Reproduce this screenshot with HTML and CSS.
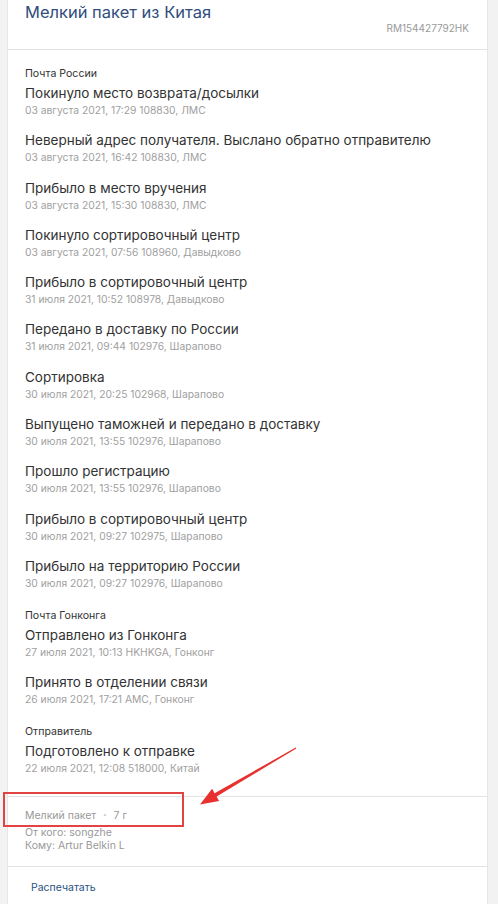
FILE: index.html
```html
<!DOCTYPE html>
<html lang="ru">
<head>
<meta charset="utf-8">
<link rel="stylesheet" href="styles.css">
</head>
<body>
<div class="card">
  <div class="head">
    <div class="title">Мелкий пакет из Китая</div>
    <div class="track">RM154427792HK</div>
  </div>
  <div class="events">
    <div class="group">
      <div class="org">Почта России</div>
      <div class="ev"><div class="ev-t">Покинуло место возврата/досылки</div><div class="ev-d">03 августа 2021, 17:29 108830, ЛМС</div></div>
      <div class="ev"><div class="ev-t">Неверный адрес получателя. Выслано обратно отправителю</div><div class="ev-d">03 августа 2021, 16:42 108830, ЛМС</div></div>
      <div class="ev"><div class="ev-t">Прибыло в место вручения</div><div class="ev-d">03 августа 2021, 15:30 108830, ЛМС</div></div>
      <div class="ev"><div class="ev-t">Покинуло сортировочный центр</div><div class="ev-d">03 августа 2021, 07:56 108960, Давыдково</div></div>
      <div class="ev"><div class="ev-t">Прибыло в сортировочный центр</div><div class="ev-d">31 июля 2021, 10:52 108978, Давыдково</div></div>
      <div class="ev"><div class="ev-t">Передано в доставку по России</div><div class="ev-d">31 июля 2021, 09:44 102976, Шарапово</div></div>
      <div class="ev"><div class="ev-t">Сортировка</div><div class="ev-d">30 июля 2021, 20:25 102968, Шарапово</div></div>
      <div class="ev"><div class="ev-t">Выпущено таможней и передано в доставку</div><div class="ev-d">30 июля 2021, 13:55 102976, Шарапово</div></div>
      <div class="ev"><div class="ev-t">Прошло регистрацию</div><div class="ev-d">30 июля 2021, 13:55 102976, Шарапово</div></div>
      <div class="ev"><div class="ev-t">Прибыло в сортировочный центр</div><div class="ev-d">30 июля 2021, 09:27 102975, Шарапово</div></div>
      <div class="ev"><div class="ev-t">Прибыло на территорию России</div><div class="ev-d">30 июля 2021, 09:27 102976, Шарапово</div></div>
    </div>
    <div class="group">
      <div class="org">Почта Гонконга</div>
      <div class="ev"><div class="ev-t">Отправлено из Гонконга</div><div class="ev-d">27 июля 2021, 10:13 HKHKGA, Гонконг</div></div>
      <div class="ev"><div class="ev-t">Принято в отделении связи</div><div class="ev-d">26 июля 2021, 17:21 AMC, Гонконг</div></div>
    </div>
    <div class="group">
      <div class="org">Отправитель</div>
      <div class="ev"><div class="ev-t">Подготовлено к отправке</div><div class="ev-d">22 июля 2021, 12:08 518000, Китай</div></div>
    </div>
  </div>
  <div class="info">
    <div class="info-main">Мелкий пакет <span class="dot">•</span> 7 г</div>
    <div class="info-line first">От кого: songzhe</div>
    <div class="info-line">Кому: Artur Belkin L</div>
  </div>
  <div class="actions">
    <a class="print">Распечатать</a>
  </div>
</div>
<div class="mark-box"></div>
<svg class="mark-arrow" width="498" height="904" viewBox="0 0 498 904">
  <polygon points="295.7,747.6 214.6,793.2 212.1,788.8 200,804.5 219.1,801 216.6,796.6 296.3,748.4" fill="#e8302e"/>
</svg>
</body>
</html>
```
FILE: styles.css
```css
html, body {
  margin: 0;
  padding: 0;
}
body {
  background: #f2f2f2;
  font-family: "Inter", "Noto Sans", sans-serif;
  color: #333;
  position: relative;
  width: 498px;
  height: 904px;
  overflow: hidden;
}
.card {
  margin-left: 7px;
  width: 479px;
  background: #fff;
  border-left: 1px solid #e6e6e6;
  border-right: 1px solid #e6e6e6;
  height: 904px;
}
.head {
  padding: 2px 18px 15px 17px;
  border-bottom: 1px solid #e3e3e3;
}
.title {
  font-size: 16.5px;
  line-height: 20px;
  color: #2f4d7d;
}
.track {
  text-align: right;
  font-size: 10px;
  line-height: 12px;
  color: #9a9a9a;
}
.events {
  padding: 17px 17px 21px;
  border-bottom: 1px solid #e3e3e3;
}
.group + .group {
  margin-top: 19px;
}
.org {
  font-size: 10.6px;
  line-height: 14px;
  color: #333;
  margin-bottom: 2px;
}
.ev + .ev {
  margin-top: 13.3px;
}
.ev-t {
  font-size: 13.5px;
  line-height: 20px;
  color: #333;
}
.ev-d {
  font-size: 10.3px;
  line-height: 14px;
  color: #a0a0a0;
}
.info {
  padding: 11px 17px 14px;
  border-bottom: 1px solid #e3e3e3;
  font-size: 10.5px;
  line-height: 13px;
  color: #999;
}
.info-main .dot {
  font-size: 6px;
  margin: 0 4px;
  vertical-align: 2px;
  color: #bbb;
}
.info-line.first {
  margin-top: 4px;
}
.actions {
  padding: 8px 23px;
}
.print {
  font-size: 10.5px;
  line-height: 14px;
  color: #2a5280;
}
.mark-box {
  position: absolute;
  left: 3px;
  top: 792px;
  width: 177px;
  height: 31px;
  border: 2.5px solid #e24343;
}
.mark-arrow {
  position: absolute;
  left: 0;
  top: 0;
  pointer-events: none;
}
```
